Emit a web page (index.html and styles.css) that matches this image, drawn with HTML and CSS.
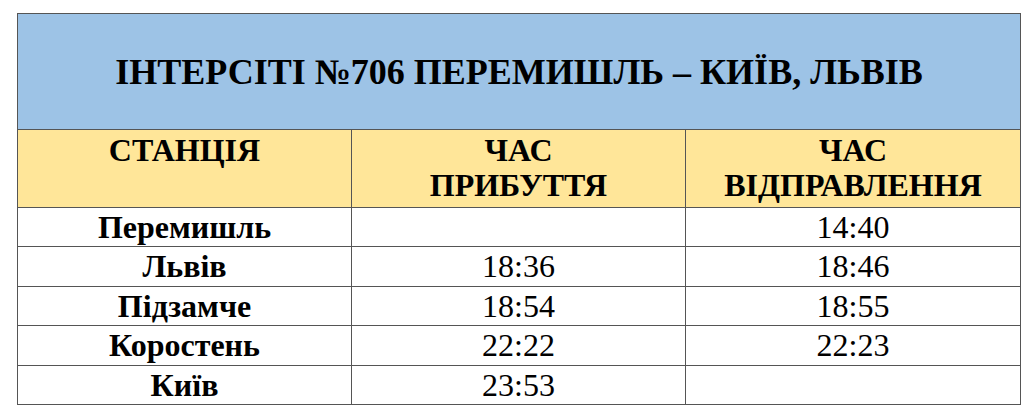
FILE: index.html
```html
<!DOCTYPE html>
<html lang="uk">
<head>
<meta charset="utf-8">
<title>Intercity 706</title>
<link rel="stylesheet" href="styles.css">
</head>
<body>
<div class="schedule">
  <p class="cell title">ІНТЕРСІТІ №706 ПЕРЕМИШЛЬ – КИЇВ, ЛЬВІВ</p>
  <p class="cell head">СТАНЦІЯ</p>
  <p class="cell head">ЧАС<br>ПРИБУТТЯ</p>
  <p class="cell head">ЧАС<br>ВІДПРАВЛЕННЯ</p>

  <p class="cell station">Перемишль</p>
  <p class="cell time"></p>
  <p class="cell time">14:40</p>

  <p class="cell station">Львів</p>
  <p class="cell time">18:36</p>
  <p class="cell time">18:46</p>

  <p class="cell station">Підзамче</p>
  <p class="cell time">18:54</p>
  <p class="cell time">18:55</p>

  <p class="cell station">Коростень</p>
  <p class="cell time">22:22</p>
  <p class="cell time">22:23</p>

  <p class="cell station">Київ</p>
  <p class="cell time">23:53</p>
  <p class="cell time"></p>
</div>
</body>
</html>
```
FILE: styles.css
```css
html {
  font-family: "Liberation Serif", "Times New Roman", serif;
}
body {
  margin: 0;
  padding: 13px 0 0 17px;
}
.schedule {
  display: grid;
  grid-template-columns: 334px 334px 335px;
  grid-template-rows: 116px 78px repeat(5, 39.4px);
  width: 1004px;
  box-sizing: border-box;
  border-left: 1px solid #555555;
  border-top: 1px solid #555555;
}
.cell {
  margin: 0;
  box-sizing: border-box;
  border-right: 1px solid #555555;
  border-bottom: 1px solid #555555;
  text-align: center;
  font-family: "Liberation Serif", "Times New Roman", serif;
  font-size: 32px;
}
.title {
  grid-column: 1 / 4;
  background: #9dc3e6;
  font-size: 36px;
  font-weight: bold;
  display: flex;
  align-items: center;
  justify-content: center;
}
.head {
  background: #ffe699;
  font-weight: bold;
  line-height: 35px;
  padding-top: 3px;
}
.station,
.time {
  line-height: 36px;
  padding-top: 1px;
}
.station {
  font-weight: bold;
}
```
